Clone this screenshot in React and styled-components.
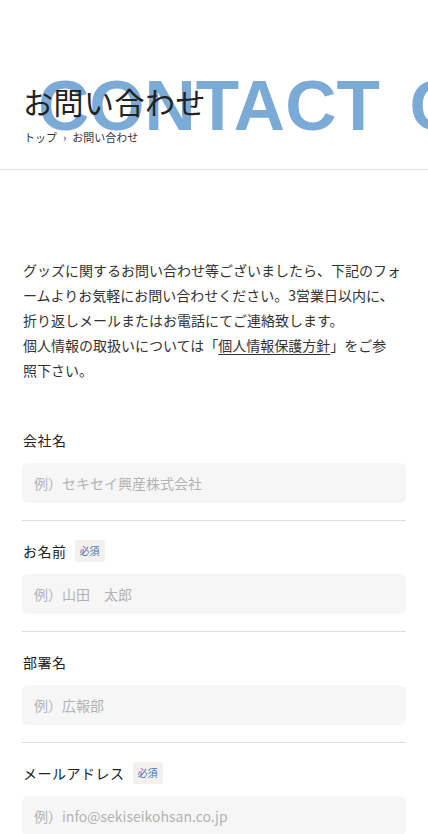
import styled, { createGlobalStyle } from "styled-components";

const GlobalStyle = createGlobalStyle`
  html, body {
    margin: 0;
    padding: 0;
    background: #fff;
  }
  body {
    font-family: "Noto Sans CJK JP", "Noto Sans", sans-serif;
    color: #333;
    -webkit-font-smoothing: antialiased;
  }
  * {
    box-sizing: border-box;
  }
`;

const PageHeader = styled.header`
  position: relative;
  overflow: hidden;
  padding: 80px 24px 24px;
  border-bottom: 1px solid #e0e0e0;
`;

const BigWord = styled.span`
  position: absolute;
  top: 70px;
  left: 38px;
  font-family: "Liberation Sans", Arial, sans-serif;
  font-weight: bold;
  font-size: 71px;
  line-height: 72px;
  color: #7aaad5;
  white-space: nowrap;
  word-spacing: 10px;
  z-index: 0;
`;

const Title = styled.h1`
  position: relative;
  z-index: 1;
  margin: 0 0 0 -1px;
  font-size: 30px;
  line-height: 42px;
  font-weight: 400;
  color: #222;
  letter-spacing: 0.5px;
`;

const Crumbs = styled.nav`
  position: relative;
  z-index: 1;
  display: flex;
  align-items: center;
  gap: 6px;
  margin-top: 7px;
  font-size: 11px;
  line-height: 16px;
  color: #333;
`;

const Main = styled.main`
  padding: 88px 22px 0;
`;

const Lead = styled.p`
  margin: 0 0 46px;
  padding-left: 1px;
  font-size: 14px;
  line-height: 25px;
  color: #333;
  line-break: anywhere;
  a {
    color: #333;
    text-decoration: underline;
    text-underline-offset: 3px;
  }
`;

const Field = styled.div`
  padding: 0 0 17px;
  border-bottom: 1px solid #dedede;
  & + & {
    padding-top: 19px;
  }
`;

const LabelRow = styled.div`
  display: flex;
  align-items: center;
  gap: 8px;
  height: 22px;
  margin-bottom: 12px;
  padding-left: 1px;
`;

const Label = styled.label`
  font-size: 14px;
  font-weight: 400;
  color: #222;
  letter-spacing: 0.5px;
`;

const Required = styled.span`
  font-size: 10px;
  line-height: 16px;
  padding: 3px 5px;
  border-radius: 3px;
  background: #f3f0ed;
  color: #3b78b4;
`;

const Input = styled.input`
  display: block;
  width: 100%;
  height: 40px;
  padding: 0 12px;
  border: none;
  border-radius: 6px;
  background: #f6f6f6;
  font-family: inherit;
  font-size: 14px;
  color: #333;
  outline: none;
  &::placeholder {
    color: #b3b3b3;
  }
`;

const fields = [
  { label: "会社名", placeholder: "例）セキセイ興産株式会社" },
  { label: "お名前", placeholder: "例）山田　太郎", required: true },
  { label: "部署名", placeholder: "例）広報部" },
  { label: "メールアドレス", placeholder: "例）info@sekiseikohsan.co.jp", required: true },
];

export default function App() {
  return (
    <>
      <GlobalStyle />
      <PageHeader>
        <BigWord>CONTACT CONTACT</BigWord>
        <Title>お問い合わせ</Title>
        <Crumbs>
          <span>トップ</span>
          <span>›</span>
          <span>お問い合わせ</span>
        </Crumbs>
      </PageHeader>
      <Main>
        <Lead>
          グッズに関するお問い合わせ等ございましたら、下記のフォームよりお気軽にお問い合わせください。3営業日以内に、折り返しメールまたはお電話にてご連絡致します。
          <br />
          個人情報の取扱いについては「<a href="#">個人情報保護方針</a>」をご参
          <br />
          照下さい。
        </Lead>
        <form>
          {fields.map((f) => (
            <Field key={f.label}>
              <LabelRow>
                <Label>{f.label}</Label>
                {f.required && <Required>必須</Required>}
              </LabelRow>
              <Input placeholder={f.placeholder} />
            </Field>
          ))}
        </form>
      </Main>
    </>
  );
}
